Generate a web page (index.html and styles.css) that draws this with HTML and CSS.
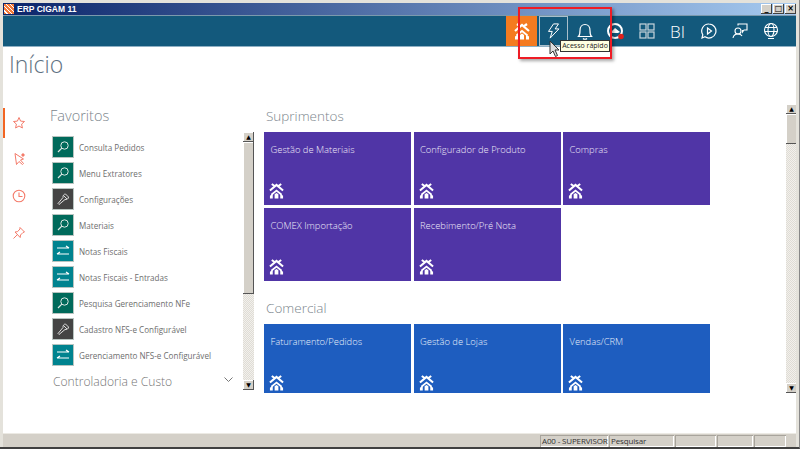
FILE: index.html
```html
<!DOCTYPE html>
<html lang="pt">
<head>
<meta charset="utf-8">
<title>ERP CIGAM 11</title>
<link rel="stylesheet" href="styles.css">
</head>
<body>
<svg class="defs" width="0" height="0" aria-hidden="true">
  <symbol id="logo" viewBox="0 0 16 16">
    <path d="M1 7.500L8 1.500l7 6M3 .500L7 3.500M13 .500L9 3.500" fill="none" stroke="#fff" stroke-width="2.200"/>
    <path d="M2.500 12L8 7.500l5.500 4.500" fill="none" stroke="#fff" stroke-width="1.800"/>
    <path d="M1 16v-3l3-2v5zM6 16v-4.500L8 10l2 1.500V16zM12 16v-5l3 2v3z" fill="#fff"/>
  </symbol>
  <symbol id="search" viewBox="0 0 22 22">
    <circle cx="12.500" cy="9.500" r="3.700" fill="none" stroke="#dfe9e6" stroke-width="1"/>
    <path d="M9.800 12.200L6 16" stroke="#dfe9e6" stroke-width="1.200"/>
  </symbol>
  <symbol id="wrench" viewBox="0 0 22 22">
    <path d="M7 16.500l-1-1 5-6c-.3-1.700.8-3.500 2.500-3.500l3 3c0 1.800-1.700 3-3.500 2.500zM11.500 7.500l3.500 3.500" fill="none" stroke="#ddd" stroke-width="1"/>
  </symbol>
  <symbol id="arrows" viewBox="0 0 22 22">
    <path d="M5 8h12M14 6l3 2M17 14H5M8 12l-3 2" stroke="#fff" stroke-width="1.200" fill="none"/>
  </symbol>
</svg>

<div class="window">
  <header class="titlebar">
    <span class="app-icon"></span>
    <span class="app-name">ERP CIGAM 11</span>
    <div class="win-btns">
      <span class="win-btn">_</span><span class="win-btn">□</span><span class="win-btn">×</span>
    </div>
  </header>

  <nav class="toolbar">
    <span class="tool tool-logo"><svg width="16" height="17"><use href="#logo"/></svg></span>
    <span class="tool tool-active">
      <svg width="15" height="18" viewBox="0 0 18 20" fill="none" stroke="#fff" stroke-width="1.200"><path d="M9 1.500h6l-4 6h4.500L5 18.500l2.500-8H3z"/></svg>
    </span>
    <span class="tool">
      <svg width="18" height="20" viewBox="0 0 18 20" fill="none" stroke="#fff" stroke-width="1.200"><path d="M2.500 15.500c1.500-1.500 1.500-3 1.500-6 0-3.500 2-6 5-6s5 2.500 5 6c0 3 0 4.500 1.500 6zM7 17.500c1 1 3 1 4 0"/></svg>
    </span>
    <span class="tool">
      <svg width="22" height="20" viewBox="0 0 22 20" fill="none"><circle cx="10" cy="10" r="7" stroke="#fff" stroke-width="2"/><path d="M5 12l5-5 5 4-2 1H7z" fill="#fff"/><circle cx="16" cy="15.500" r="2.800" fill="#e0201c"/></svg>
    </span>
    <span class="tool">
      <svg width="18" height="18" viewBox="0 0 18 18" fill="none" stroke="#c9d6dd" stroke-width="1.200"><rect x="2" y="2" width="6" height="6"/><rect x="10" y="2" width="6" height="6"/><rect x="2" y="10" width="6" height="6"/><rect x="10" y="10" width="6" height="6"/></svg>
    </span>
    <span class="tool tool-text">BI</span>
    <span class="tool">
      <svg width="18" height="18" viewBox="0 0 18 18" fill="none" stroke="#fff" stroke-width="1.200"><path d="M9 2a7 7 0 1 1-4 12.800L2 16l.8-3.300A7 7 0 0 1 9 2z"/><path d="M7.500 6l4 3-4 3z"/></svg>
    </span>
    <span class="tool">
      <svg width="18" height="18" viewBox="0 0 18 18" fill="none" stroke="#fff" stroke-width="1.100"><circle cx="7" cy="9" r="3"/><path d="M2 16c.5-3 2.500-4 5-4s3.500 1 4 2M7 3.500V2h9v6h-3l-1.500 2V8"/></svg>
    </span>
    <span class="tool">
      <svg width="18" height="18" viewBox="0 0 18 18" fill="none" stroke="#fff" stroke-width="1.100"><circle cx="9" cy="8" r="6.500"/><ellipse cx="9" cy="8" rx="3" ry="6.500"/><path d="M3 5.500h12M2.500 9.500h13M6 16.500h6"/></svg>
    </span>
  </nav>

  <h1 class="page-title">Início</h1>

  <main class="content">
    <aside class="rail">
      <span class="rail-item rail-current">
        <svg width="14" height="14" viewBox="0 0 14 14" fill="none" stroke="#f47b6a"><path d="M7 1.500l1.600 3.600 3.900.4-2.900 2.600.8 3.900L7 10l-3.400 2 .8-3.900-2.900-2.600 3.900-.4z"/></svg>
      </span>
      <span class="rail-item">
        <svg width="14" height="14" viewBox="0 0 14 14" fill="none" stroke="#f47b6a"><path d="M3 1.500l1.500 11 2.500-3 3.500 3 1-1-3-3.500 3-1z"/><circle cx="11" cy="3" r="1.200" fill="#f47b6a"/></svg>
      </span>
      <span class="rail-item">
        <svg width="14" height="14" viewBox="0 0 14 14" fill="none" stroke="#f47b6a" stroke-width="1.100"><circle cx="7" cy="7" r="5.800"/><path d="M7 3.500V7.500H10.500"/></svg>
      </span>
      <span class="rail-item">
        <svg width="14" height="14" viewBox="0 0 14 14" fill="none" stroke="#f47b6a"><path d="M8 1.500l4.500 4.500-1.500.5-2.500 2.500-.3 2.500L3 6l2.500-.3L8 3zM5.500 8.500L1.500 12.500"/></svg>
      </span>
    </aside>

    <section class="favorites">
      <h2 class="fav-heading">Favoritos</h2>
      <div class="fav-body">
        <div class="fav-list">
          <div class="fav-row"><span class="fav-icon green"><svg width="22" height="22"><use href="#search"/></svg></span>Consulta Pedidos</div>
          <div class="fav-row"><span class="fav-icon green"><svg width="22" height="22"><use href="#search"/></svg></span>Menu Extratores</div>
          <div class="fav-row"><span class="fav-icon dark"><svg width="22" height="22"><use href="#wrench"/></svg></span>Configurações</div>
          <div class="fav-row"><span class="fav-icon green"><svg width="22" height="22"><use href="#search"/></svg></span>Materiais</div>
          <div class="fav-row"><span class="fav-icon teal"><svg width="22" height="22"><use href="#arrows"/></svg></span>Notas Fiscais</div>
          <div class="fav-row"><span class="fav-icon teal"><svg width="22" height="22"><use href="#arrows"/></svg></span>Notas Fiscais - Entradas</div>
          <div class="fav-row"><span class="fav-icon green"><svg width="22" height="22"><use href="#search"/></svg></span>Pesquisa Gerenciamento NFe</div>
          <div class="fav-row"><span class="fav-icon dark"><svg width="22" height="22"><use href="#wrench"/></svg></span>Cadastro NFS-e Configurável</div>
          <div class="fav-row"><span class="fav-icon teal"><svg width="22" height="22"><use href="#arrows"/></svg></span>Gerenciamento NFS-e Configurável</div>
          <div class="fav-group">
            <span>Controladoria e Custo</span>
            <svg width="9" height="6" viewBox="0 0 9 6" fill="none" stroke="#777"><path d="M.5 .5l4 4 4-4"/></svg>
          </div>
        </div>
        <div class="scrollbar fav-scroll">
          <span class="sb-btn">▲</span>
          <span class="sb-thumb"></span>
          <span class="sb-track"></span>
          <span class="sb-btn">▼</span>
        </div>
      </div>
    </section>

    <section class="modules">
      <h2 class="mod-heading">Suprimentos</h2>
      <div class="tiles">
        <div class="tile purple">Gestão de Materiais<svg class="tile-logo"><use href="#logo"/></svg></div>
        <div class="tile purple">Configurador de Produto<svg class="tile-logo"><use href="#logo"/></svg></div>
        <div class="tile purple">Compras<svg class="tile-logo"><use href="#logo"/></svg></div>
        <div class="tile purple">COMEX Importação<svg class="tile-logo"><use href="#logo"/></svg></div>
        <div class="tile purple">Recebimento/Pré Nota<svg class="tile-logo"><use href="#logo"/></svg></div>
      </div>
      <h2 class="mod-heading mod-second">Comercial</h2>
      <div class="tiles">
        <div class="tile blue">Faturamento/Pedidos<svg class="tile-logo"><use href="#logo"/></svg></div>
        <div class="tile blue">Gestão de Lojas<svg class="tile-logo"><use href="#logo"/></svg></div>
        <div class="tile blue">Vendas/CRM<svg class="tile-logo"><use href="#logo"/></svg></div>
      </div>
    </section>

    <div class="scrollbar main-scroll">
      <span class="sb-btn">▲</span>
      <span class="sb-thumb"></span>
      <span class="sb-track"></span>
      <span class="sb-btn">▼</span>
    </div>
  </main>

  <footer class="statusbar">
    <span class="panel panel-user">A00 - SUPERVISOR</span>
    <span class="panel panel-search">Pesquisar</span>
    <span class="panel panel-a"></span>
    <span class="panel panel-b"></span>
    <span class="panel panel-c"></span>
  </footer>
</div>

<div class="highlight"></div>
<div class="tooltip">Acesso rápido</div>
<svg class="cursor" width="12" height="18" viewBox="0 0 12 18"><path d="M1 1v13l3-3 2.500 5.500 2-1L6 10h4z" fill="#ddd" stroke="#333" stroke-width="1"/></svg>
</body>
</html>
```

FILE: styles.css
```css
* { box-sizing: border-box; }
html, body { margin: 0; padding: 0; }
body {
  width: 800px;
  height: 449px;
  overflow: hidden;
  position: relative;
  background: #d4d0c8;
  font-family: "Open Sans", "Liberation Sans", sans-serif;
}
.defs { position: absolute; }
h1, h2 { margin: 0; font-weight: 300; }

.window {
  width: 800px;
  height: 449px;
  padding: 3px 3px 0 3px;
  display: flex;
  flex-direction: column;
  background: #e4e2db;
  border-bottom: 2px solid #404040;
  border-right: 1px solid #888;
}

.titlebar {
  height: 12px;
  flex: none;
  display: flex;
  align-items: center;
  background: linear-gradient(90deg, #0a246a 0%, #a6caf0 100%);
  color: #fff;
}
.app-icon {
  width: 10px;
  height: 10px;
  margin: 0 3px 0 1px;
  background: repeating-linear-gradient(45deg, #f47b3a 0 2px, #fff 2px 3px);
}
.app-name {
  font: 700 8.500px "Liberation Sans", sans-serif;
}
.win-btns { margin-left: auto; display: flex; gap: 1px; }
.win-btn {
  width: 11px;
  height: 10px;
  background: #d4d0c8;
  color: #000;
  font: 700 8px/9px "DejaVu Sans", sans-serif;
  text-align: center;
  box-shadow: inset -1px -1px #404040, inset 1px 1px #fff;
}

.toolbar {
  height: 32px;
  flex: none;
  display: flex;
  background: #13597c;
  border-top: 1px solid #7b99ad;
  border-bottom: 1px solid #8fb0c4;
  padding-left: 503px;
}
.tool {
  width: 31px;
  display: flex;
  align-items: center;
  justify-content: center;
  flex: none;
  color: #fff;
}
.tool-logo { background: #f47b20; height: 30px; width: 31px; margin-right: 2px; }
.tool-active {
  width: 29px;
  height: 30px;
  border: 1px solid #a9bfcb;
  margin-right: 1px;
}
.tool-text { font: 300 17px "Open Sans", sans-serif; }

.page-title {
  height: 42px;
  flex: none;
  background: #fff;
  padding: 1px 0 0 6px;
  font-size: 23px;
  line-height: 32px;
  color: #5f7283;
}

.content {
  flex: 1;
  min-height: 0;
  display: flex;
  background: #fff;
  padding-top: 17px;
  overflow: hidden;
}

.rail {
  width: 47px;
  flex: none;
  display: flex;
  flex-direction: column;
  padding-top: 2px;
}
.rail-item {
  height: 37px;
  flex: none;
  padding-left: 7px;
  display: flex;
  align-items: center;
  border-left: 2px solid transparent;
}
.rail-current { height: 30px; margin-bottom: 2.500px; border-left-color: #f26522; }

.favorites {
  width: 204px;
  flex: none;
  display: flex;
  flex-direction: column;
}
.fav-heading {
  font-size: 14.500px;
  line-height: 20px;
  color: #7b858c;
  height: 26px;
}
.fav-body { display: flex; height: 258px; }
.fav-list { width: 193px; padding: 2px 0 0 2px; flex: none; }
.fav-row {
  height: 26px;
  display: flex;
  align-items: center;
  gap: 5px;
  font-size: 8.100px;
  font-weight: 400;
  color: #6e6e6e;
}
.fav-icon {
  width: 22px;
  height: 22px;
  flex: none;
  display: block;
  border: 1px solid #b8c4c0;
}
.fav-icon svg { display: block; margin: -1px; }
.green { background: #006a5b; }
.dark { background: #444; }
.teal { background: #00838f; }
.fav-group {
  display: flex;
  align-items: center;
  justify-content: space-between;
  height: 26px;
  padding: 0 10px 0 1px;
  font-size: 12.100px;
  font-weight: 300;
  color: #767676;
}
.fav-group svg { margin-top: -3px; }

.scrollbar {
  width: 11px;
  flex: none;
  display: flex;
  flex-direction: column;
  background: #e9e6e0;
}
.sb-btn {
  height: 10px;
  flex: none;
  background: #d4d0c8;
  box-shadow: inset -1px -1px #555, inset 1px 1px #fff;
  color: #000;
  font: 6px/10px "DejaVu Sans", sans-serif;
  text-align: center;
}
.sb-thumb {
  flex: none;
  background: #d4d0c8;
  box-shadow: inset -1px -1px #555, inset 1px 1px #fff;
}
.sb-track {
  flex: 1;
  background: repeating-conic-gradient(#f2f0ec 0 25%, #dfdcd5 0 50%) 0 0 / 2px 2px;
}
.fav-scroll .sb-thumb { height: 152px; }

.modules {
  width: 522px;
  margin-left: 10px;
  flex: none;
  height: 287px;
  overflow: hidden;
}
.mod-heading {
  font-size: 13.500px;
  line-height: 20px;
  height: 26px;
  padding-left: 2px;
  color: #7b858c;
}
.mod-second { margin-top: 17px; }
.tiles {
  display: grid;
  grid-template-columns: repeat(3, 147px);
  grid-auto-rows: 73px;
  gap: 3px 2.500px;
}
.tile {
  position: relative;
  padding: 10px 0 0 6.500px;
  font-size: 9.400px;
  font-weight: 300;
  line-height: 16px;
  color: #eeeaf8;
}
.purple { background: #5035a6; }
.blue { background: #1e5dbf; color: #e6eefa; }
.tile-logo {
  position: absolute;
  left: 5px;
  bottom: 6px;
  width: 15px;
  height: 16px;
}

.main-scroll {
  width: 11px;
  height: 289px;
  margin: -2px 0 0 0;
}
.main-scroll .sb-thumb { height: 30px; }

.statusbar {
  height: 14px;
  flex: none;
  display: flex;
  justify-content: flex-end;
  background: #d4d0c8;
  padding: 1px 10px 0 0;
  gap: 1px;
  border-top: 1px solid #eceae4;
}
.panel {
  box-shadow: inset 1px 1px #a8a49c, inset -1px -1px #fff;
  font: 400 8px/12px "Open Sans", sans-serif;
  letter-spacing: -.15px;
  white-space: nowrap;
  color: #333;
  padding-left: 2px;
}
.panel-user { width: 68px; }
.panel-search { width: 65px; }
.panel-a { width: 41px; }
.panel-b { width: 36px; }
.panel-c { width: 32px; }

.highlight {
  position: absolute;
  left: 518px;
  top: 7px;
  width: 94px;
  height: 52px;
  border: 2px solid #ee1c25;
  box-shadow: 2px 2px 3px rgba(0,0,0,.35);
}
.tooltip {
  position: absolute;
  left: 560px;
  top: 40px;
  width: 50px;
  height: 12px;
  background: #ffffe1;
  border: 1px solid #333;
  font: 400 7px/10px "Open Sans", sans-serif;
  color: #222;
  text-align: center;
  white-space: nowrap;
}
.cursor {
  position: absolute;
  left: 549px;
  top: 40px;
}
```
